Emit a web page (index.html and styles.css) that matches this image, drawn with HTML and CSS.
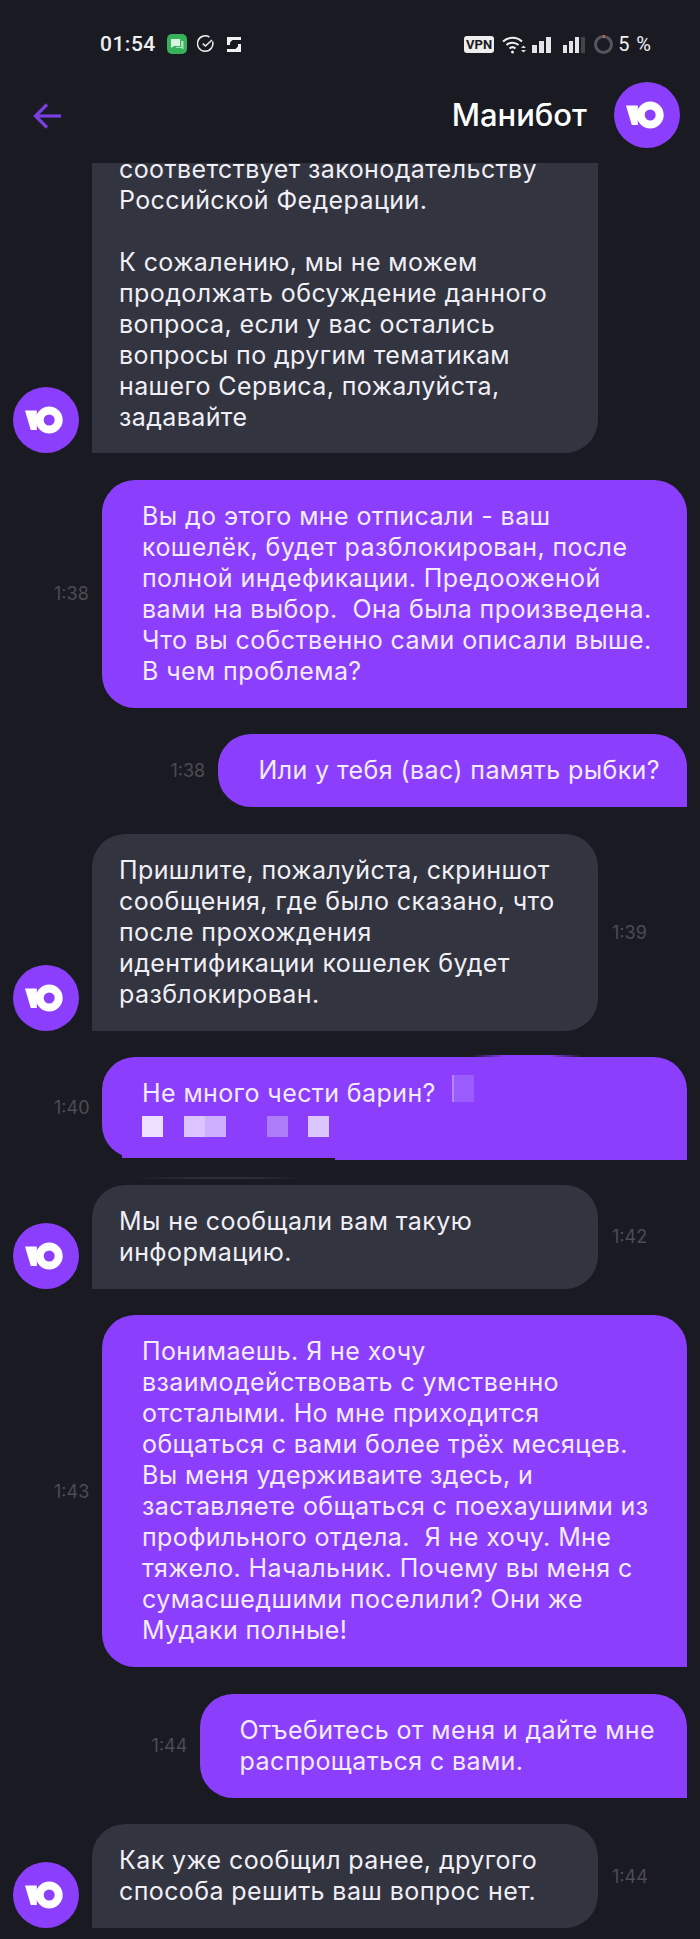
FILE: index.html
```html
<!DOCTYPE html>
<html lang="ru">
<head>
    <meta charset="UTF-8">
    <meta name="viewport" content="width=device-width, initial-scale=1.0">
    <title>Манибот</title>
    <link rel="stylesheet" href="styles.css">
</head>
<body>
    <svg class="sprite" width="0" height="0">
        <symbol id="yoo" viewBox="0 0 66 66">
            <circle cx="33" cy="33" r="33" fill="#8b3ffd"/>
            <path d="M12 23.5h11.8V43h-6z" fill="#fff"/>
            <circle cx="36.2" cy="33" r="9.5" fill="none" stroke="#fff" stroke-width="8"/>
        </symbol>
    </svg>

    <div class="screen">
        <!-- Статус-бар -->
        <div class="status">
            <div class="status-left">
                <span class="time">01:54</span>
                <svg class="ico-chat" width="20" height="20" viewBox="0 0 20 20">
                    <rect width="20" height="20" rx="5" fill="#36b25a"/>
                    <path d="M4 5h9v7H7l-3 2z" fill="#d9f3df"/>
                    <path d="M14 7h2.500v8.500L14 14H9v-1h5z" fill="#a9e2b9"/>
                </svg>
                <svg class="ico-check" width="18" height="18" viewBox="0 0 18 18" fill="none" stroke="#eee" stroke-width="1.5">
                    <path d="M15.6 6.5A7.7 7.7 0 1 1 12.5 2.2"/>
                    <path d="M5.8 8.6l2.6 2.4 6.6-6"/>
                </svg>
                <svg class="ico-s" width="14" height="15" viewBox="0 0 14 15" fill="#f2f2f2">
                    <path d="M0 0h14v3H5.500L3 5.600V8H0z"/>
                    <path d="M14 15H0v-3h8.500L11 9.400V7h3z"/>
                </svg>
            </div>
            <div class="status-right">
                <span class="vpn">VPN</span>
                <svg class="ico-wifi" width="24" height="19" viewBox="0 0 24 19" fill="none" stroke="#eee" stroke-width="2">
                    <path d="M1 6.500a14 14 0 0 1 19 0"/>
                    <path d="M4.500 10a9 9 0 0 1 12 0"/>
                    <path d="M7.500 13.500a4.500 4.500 0 0 1 6 0"/>
                    <circle cx="10.500" cy="17" r="1.500" fill="#eee" stroke="none"/>
                    <path d="M19 13h5l-2.500-2.500zM19 15h5l-2.500 2.500z" fill="#ddd" stroke="none"/>
                </svg>
                <div class="bars">
                    <i class="b1"></i><i class="b2"></i><i class="b3"></i>
                </div>
                <div class="bars bars-weak">
                    <i class="b1"></i><i class="b2"></i><i class="b3"></i><i class="b4"></i>
                </div>
                <svg class="ico-ring" width="19" height="19" viewBox="0 0 19 19" fill="none" stroke-width="3">
                    <circle cx="9.500" cy="9.500" r="8" stroke="#55565c"/>
                    <path d="M9 1.500h1.500" stroke="#e8694a"/>
                </svg>
                <span class="battery">5 %</span>
            </div>
        </div>

        <!-- Шапка чата -->
        <div class="topbar">
            <svg class="back" width="28" height="26" viewBox="0 0 28 26" fill="none" stroke="#7a3fe0" stroke-width="3.200">
                <path d="M14 1.500L2.500 13 14 24.500"/>
                <path d="M2.500 13H28"/>
            </svg>
            <span class="title">Манибот</span>
            <svg class="avatar" width="66" height="66"><use href="#yoo"/></svg>
        </div>

        <!-- Сообщения -->
        <div class="chat">
            <div class="row in">
                <svg class="avatar" width="66" height="66"><use href="#yoo"/></svg>
                <div class="bubble clipped">соответствует законодательству<br>Российской Федерации.<br><br>К сожалению, мы не можем<br>продолжать обсуждение данного<br>вопроса, если у вас остались<br>вопросы по другим тематикам<br>нашего Сервиса, пожалуйста,<br>задавайте</div>
            </div>

            <div class="row out">
                <span class="stamp">1:38</span>
                <div class="bubble wide">Вы до этого мне отписали - ваш<br>кошелёк, будет разблокирован, после<br>полной индефикации. Предооженой<br>вами на выбор.&nbsp; Она была произведена.<br>Что вы собственно сами описали выше.<br>В чем проблема?</div>
            </div>

            <div class="row out">
                <span class="stamp">1:38</span>
                <div class="bubble">Или у тебя (вас) память рыбки?</div>
            </div>

            <div class="row in">
                <svg class="avatar" width="66" height="66"><use href="#yoo"/></svg>
                <div class="bubble">Пришлите, пожалуйста, скриншот<br>сообщения, где было сказано, что<br>после прохождения<br>идентификации кошелек будет<br>разблокирован.</div>
                <span class="stamp">1:39</span>
            </div>

            <div class="row out">
                <span class="stamp">1:40</span>
                <div class="bubble wide smeared">
                    <span class="smear-top"></span>
                    <span class="smear-ghost"></span>
                    <div class="first-line">Не много чести барин?<span class="mosaic top-block"></span></div>
                    <div class="mosaic-row">
                        <span class="mosaic m1"></span>
                        <span class="mosaic m2"></span>
                        <span class="mosaic m3"></span>
                        <span class="mosaic m4"></span>
                        <span class="mosaic m5"></span>
                    </div>
                </div>
            </div>

            <div class="row in">
                <svg class="avatar" width="66" height="66"><use href="#yoo"/></svg>
                <div class="bubble">Мы не сообщали вам такую<br>информацию.</div>
                <span class="stamp">1:42</span>
            </div>

            <div class="row out">
                <span class="stamp">1:43</span>
                <div class="bubble wide">Понимаешь. Я не хочу<br>взаимодействовать с умственно<br>отсталыми. Но мне приходится<br>общаться с вами более трёх месяцев.<br>Вы меня удерживаите здесь, и<br>заставляете общаться с поехаушими из<br>профильного отдела.&nbsp; Я не хочу. Мне<br>тяжело. Начальник. Почему вы меня с<br>сумасшедшими поселили? Они же<br>Мудаки полные!</div>
            </div>

            <div class="row out">
                <span class="stamp">1:44</span>
                <div class="bubble roomy">Отъебитесь от меня и дайте мне<br>распрощаться с вами.</div>
            </div>

            <div class="row in">
                <svg class="avatar" width="66" height="66"><use href="#yoo"/></svg>
                <div class="bubble">Как уже сообщил ранее, другого<br>способа решить ваш вопрос нет.</div>
                <span class="stamp">1:44</span>
            </div>
        </div>
    </div>
</body>
</html>
```

FILE: styles.css
```css
* {
    margin: 0;
    padding: 0;
    box-sizing: border-box;
}

body {
    background: #1a1b22;
    font-family: 'Inter', 'Noto Sans', sans-serif;
    color: #f1eff6;
}

.sprite {
    display: block;
}

.screen {
    width: 700px;
    height: 1939px;
    overflow: hidden;
}

/* Статус-бар */
.status {
    height: 82px;
    padding: 34px 48px 0 100px;
    display: flex;
    justify-content: space-between;
    align-items: flex-start;
    font-family: 'Roboto', sans-serif;
    color: #efeff1;
}

.status-left,
.status-right {
    display: flex;
    align-items: center;
    height: 20px;
}

.time {
    width: 54px;
    font-size: 21px;
    font-weight: 500;
    letter-spacing: 0.5px;
    margin-right: 13px;
}

.ico-chat {
    margin-right: 10px;
}

.ico-check {
    margin-right: 12px;
}

.vpn {
    width: 30px;
    height: 17px;
    background: #eee;
    border-radius: 3px;
    color: #1a1b22;
    font-size: 13px;
    font-weight: 700;
    line-height: 17px;
    text-align: center;
    margin-right: 8px;
}

.ico-wifi {
    margin-right: 6px;
}

.bars {
    display: flex;
    align-items: flex-end;
    gap: 2px;
    height: 17px;
    width: 25px;
    margin-right: 6px;
}

.bars i {
    display: block;
    width: 5px;
    background: #e4e4e6;
}

.bars .b1 { height: 8px; }
.bars .b2 { height: 12px; }
.bars .b3 { height: 16px; }

.bars-weak i {
    width: 4px;
}

.bars-weak .b4 { height: 16px; background: #44454b; }

.ico-ring {
    margin-right: 5px;
}

.battery {
    font-size: 20px;
    letter-spacing: 1px;
    white-space: nowrap;
}

/* Шапка */
.topbar {
    height: 81px;
    padding: 0 20px 0 33px;
    display: flex;
    align-items: flex-start;
}

.back {
    margin-top: 21px;
}

.title {
    margin-left: auto;
    margin-right: 27px;
    margin-top: 14px;
    font-size: 31px;
    font-weight: 500;
    color: #fff;
}

.avatar {
    flex: none;
    display: block;
}

/* Сообщения */
.chat {
    height: 1776px;
    overflow: hidden;
}

.row {
    display: flex;
    margin-bottom: 26.5px;
}

.row.in {
    align-items: flex-end;
    padding-left: 13px;
}

.row.out {
    align-items: center;
    justify-content: flex-end;
    padding-right: 13px;
}

.bubble {
    font-size: 25px;
    letter-spacing: 0.4px;
    line-height: 31px;
    white-space: nowrap;
}

.in .bubble {
    width: 506px;
    margin-left: 13px;
    padding: 21px 27px;
    background: #32343f;
    border-radius: 33px 33px 33px 0;
}

.out .bubble {
    padding: 21px 27px 21px 40px;
    background: #8b3ffd;
    color: #f3ebff;
    border-radius: 33px 33px 0 33px;
}

.out .bubble.wide {
    width: 585px;
}

.out .bubble.roomy {
    padding-right: 32px;
}

.in .bubble.clipped {
    margin-top: -9px;
    padding-top: 0;
    padding-bottom: 20px;
    border-radius: 0 0 33px 0;
}

.stamp {
    flex: none;
    width: 34px;
    font-size: 18px;
    color: #4b4c54;
}

.in .stamp {
    align-self: center;
    margin-left: 14px;
}

.out .stamp {
    margin-right: 14px;
}

/* Смазанный снимок и закрашенный текст */
.bubble.smeared {
    position: relative;
}

.bubble.smeared::before {
    content: '';
    position: absolute;
    left: 20px;
    bottom: 0;
    width: 40px;
    height: 21px;
    background: #8b3ffd;
}

.bubble.smeared::after {
    content: '';
    position: absolute;
    left: 233px;
    right: 0;
    bottom: -2px;
    height: 2px;
    background: #8b3ffd;
}

.smear-top {
    position: absolute;
    top: -2px;
    left: 370px;
    width: 110px;
    height: 2px;
    background: linear-gradient(90deg, #1a1b22, #8b3ffd 30%, #8b3ffd 70%, #1a1b22);
}

.smear-ghost {
    position: absolute;
    left: 30px;
    bottom: -21px;
    width: 170px;
    height: 2px;
    background: linear-gradient(90deg, #1a1b22, #2e2f38 40%, #2e2f38 70%, #1a1b22);
}

.first-line {
    position: relative;
}

.mosaic {
    display: block;
}

.top-block {
    position: absolute;
    left: 310px;
    top: -3px;
    width: 22px;
    height: 27px;
    background: linear-gradient(90deg, #b587ff 0 2px, #9a5cff 2px);
}

.mosaic-row {
    display: flex;
    height: 21px;
    margin-top: 7px;
}

.m1 { width: 21px; margin-right: 21px; background: #ecdfff; }
.m2 { width: 21px; background: #dbc4ff; }
.m3 { width: 21px; margin-right: 41px; background: #ceaeff; }
.m4 { width: 21px; margin-right: 20px; background: #ad7cf9; }
.m5 { width: 21px; background: #dcc6ff; }
```
